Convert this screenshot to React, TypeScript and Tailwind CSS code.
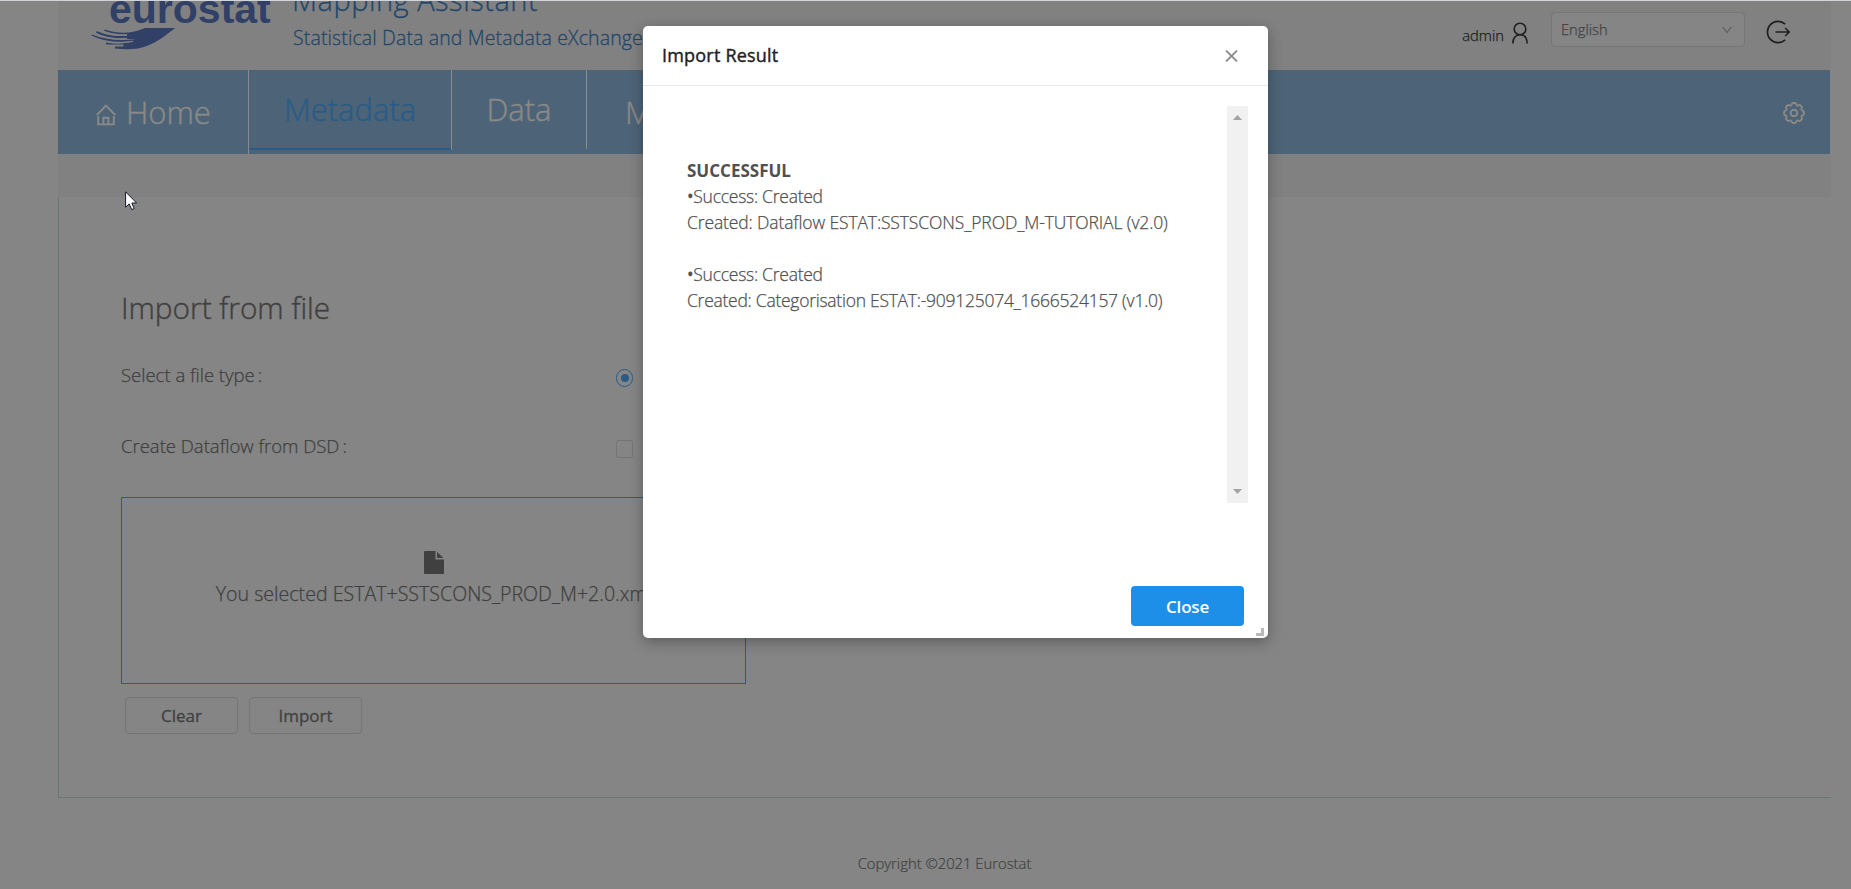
import type { ReactNode } from "react";

function HandLogo() {
  return (
    <svg width="84" height="22" viewBox="0 0 84 22" className="-mt-px block" fill="#304066">
      <path d="M54 0H84C74 8 66 14 57 17.500C47 21.500 37 22 24 20.500V18.500H32.500V16.500H15V14.600C27 16.400 36 15.500 44 12.500V11C33 11.500 15 10 5 4.500L6 3.200C16 8 26 9.500 36 8.700V7C28 6.500 20 5.500 13 2.800L14 1.500C30 7 42 5 54 0Z" />
      <path d="M.5 7.500C12 13.500 28 15 44 13V11.300C28 13 13 11.500 1 6.500Z" />
      <path d="M5 4.600C16 10 26 11 36 9.700V8C26 8.500 16 7.500 6 3.400Z" />
      <path
        d="M4 6.400C14 10.500 25 11.500 36 10.400M14 4.400C21 7 29 7.200 36 6.600M15 13.600C25 15.400 34 15 42 13.400"
        stroke="#818181"
        strokeWidth="1.300"
        fill="none"
      />
    </svg>
  );
}

function HomeIcon() {
  return (
    <svg width="20" height="22" viewBox="0 0 20 22" fill="none" stroke="#8b8987" strokeWidth="1.900">
      <path d="M.8 11L10 1.500L19.200 11" />
      <path d="M2.200 12V20.400H17.800V12" />
      <path d="M7.400 20V13.800H12.400V20" />
    </svg>
  );
}

function UserIcon() {
  return (
    <svg width="16" height="22" viewBox="0 0 16 22" fill="none" stroke="#1f1f1f" strokeWidth="1.600">
      <circle cx="8" cy="7" r="5.800" />
      <path d="M.9 21.500C.9 16 3.600 12.700 8 12.700S15.100 16 15.100 21.500" />
    </svg>
  );
}

function LogoutIcon() {
  return (
    <svg width="25" height="24" viewBox="0 0 25 24" fill="none" stroke="#1f1f1f" strokeWidth="1.600">
      <path d="M19.200 4.200A10.600 10.600 0 1 0 19.200 19.800" />
      <path d="M9.500 12H23M19.200 8L23.200 12L19.200 16" />
    </svg>
  );
}

function GearIcon() {
  const teeth = [0, 45, 90, 135, 180, 225, 270, 315];
  return (
    <svg width="22" height="22" viewBox="-11 -11 22 22" fill="none" stroke="#8b8987" strokeWidth="2">
      <circle r="3.300" />
      {teeth.map((a) => (
        <path
          key={a}
          transform={`rotate(${a})`}
          d="M-3.150 -7.600C-2.300 -7.800 -2.200 -9.900 -.900 -9.900H.900C2.200 -9.900 2.300 -7.800 3.150 -7.600"
        />
      ))}
    </svg>
  );
}

function FileIcon() {
  return (
    <svg width="20" height="23" viewBox="0 0 20 23" fill="#404040">
      <path d="M1 0H11.500V8.600H20V22Q20 23 19 23H1Q0 23 0 22V1Q0 0 1 0Z" />
      <path d="M13 .8L19.300 7.100H13Z" />
    </svg>
  );
}

function OutlineButton({ children }: { children: ReactNode }) {
  return (
    <button className="h-[37px] w-[113px] rounded-[4px] border border-[#757575] text-[17px] leading-none font-normal text-[#414141] [-webkit-text-stroke:0.3px]">
      {children}
    </button>
  );
}

function Header() {
  return (
    <header className="flex h-[69px] w-[1773px] justify-between overflow-hidden bg-[#818181]">
      <div className="flex">
        <div className="ml-[33px] w-[202px]">
          <div className="-mt-[12px] pl-[18px] font-['Liberation_Sans',sans-serif] text-[41px] leading-[40px] font-bold text-[#304066]">
            eurostat
          </div>
          <HandLogo />
        </div>
        <div className="font-light whitespace-nowrap text-[#21466a] [-webkit-text-stroke:0.3px]">
          <div className="-mt-[19px] -ml-px text-[29px] leading-[36px] tracking-[0.5px]">Mapping Assistant</div>
          <div className="mt-[6px] text-[19.5px] leading-[28px] tracking-[0.13px]">
            Statistical Data and Metadata eXchange
          </div>
        </div>
      </div>
      <div className="flex items-start pr-[40px] font-light [-webkit-text-stroke:0.25px]">
        <span className="mt-[24px] text-[14.8px] leading-[20px] text-[#1c1c1c]">admin</span>
        <span className="mt-[21px] ml-[8px]">
          <UserIcon />
        </span>
        <div className="mt-[11px] ml-[23px] flex h-[35px] w-[194px] items-center justify-between rounded-[4px] border border-[#767676] bg-[#858585] pr-[12px] pl-[9px] text-[14.7px] leading-none text-[#414141]">
          <span className="pb-px">English</span>
          <svg width="10" height="8" viewBox="0 0 10 8" fill="none" stroke="#5d5d5d" strokeWidth="1.200">
            <path d="M.8 1L5 6.500L9.200 1" />
          </svg>
        </div>
        <span className="mt-[19px] ml-[21px]">
          <LogoutIcon />
        </span>
      </div>
    </header>
  );
}

function Nav() {
  return (
    <nav className="flex h-[84px] w-[1772px] items-start bg-[#4d6478] text-[31px] leading-[40px] font-light text-[#8b8987] [-webkit-text-stroke:0.4px]">
      <div className="flex h-[84px] w-[191px] border-r border-[#8b8b8b] pl-[38px]">
        <span className="mt-[34px]">
          <HomeIcon />
        </span>
        <span className="mt-[22px] ml-[10px]">Home</span>
      </div>
      <div className="flex h-[80px] w-[203px] justify-center border-r border-[#8b8b8b]">
        <span className="h-[80px] w-full border-b-2 border-[#285c86] pt-[19px] text-center text-[#285c86]">
          Metadata
        </span>
      </div>
      <div className="h-[79px] w-[135px] border-r border-[#8b8b8b] pt-[19px] text-center">Data</div>
      <div className="w-[200px] pt-[22px] pl-[38px]">Mapping</div>
      <span className="mt-[32px] mr-[25px] ml-auto">
        <GearIcon />
      </span>
    </nav>
  );
}

function ImportForm() {
  return (
    <main className="h-[601px] w-[1773px] border-b border-l border-[#6b7776] pt-[91px] pl-[62px] font-light text-[#404040]">
      <h1 className="text-[29.8px] leading-[40px] [-webkit-text-stroke:0.4px]">Import from file</h1>
      <div className="mt-[33px] flex h-[28px] items-start text-[18.5px] leading-[28px] [-webkit-text-stroke:0.25px]">
        <span className="w-[495px]">
          Select a file type<span className="ml-[3px]">:</span>
        </span>
        <span className="mt-[8px] flex h-[18px] w-[17px] items-center justify-center rounded-full border-[1.500px] border-[#285c86]">
          <span className="size-[8px] rounded-full bg-[#285c86]" />
        </span>
      </div>
      <div className="mt-[43px] flex h-[28px] items-start text-[18.5px] leading-[28px] [-webkit-text-stroke:0.25px]">
        <span className="w-[495px]">
          Create Dataflow from DSD<span className="ml-[3px]">:</span>
        </span>
        <span className="mt-[8px] h-[18px] w-[17px] rounded-[2px] border border-[#757575]" />
      </div>
      <div className="mt-[37px] flex h-[187px] w-[625px] flex-col items-center border border-[#37587c] pt-[53px]">
        <FileIcon />
        <p className="mt-[6px] text-[19.6px] leading-[28px] [-webkit-text-stroke:0.25px]">
          You selected ESTAT+SSTSCONS_PROD_M+2.0.xml
        </p>
      </div>
      <div className="mt-[13px] ml-[4px] flex gap-[11px]">
        <OutlineButton>Clear</OutlineButton>
        <OutlineButton>Import</OutlineButton>
      </div>
    </main>
  );
}

function ImportResult() {
  return (
    <section
      role="dialog"
      className="absolute top-[25px] left-[643px] flex h-[612px] w-[625px] flex-col rounded-[5px] bg-white shadow-[0_4px_14px_rgba(0,0,0,0.3)]"
    >
      <div className="flex h-[60px] items-center justify-between border-b border-[#e8e8e8] pr-[30px] pl-[19px]">
        <h2 className="pb-px text-[18px] leading-none font-normal tracking-[0.2px] text-[#222] [-webkit-text-stroke:0.4px]">
          Import Result
        </h2>
        <svg width="13" height="12" viewBox="0 0 13 12" fill="none" stroke="#8c8c8c" strokeWidth="1.900">
          <path d="M1 .6L12 11.400M12 .6L1 11.400" />
        </svg>
      </div>
      <div className="mt-[20px] mr-[20px] ml-[44px] flex h-[397px] justify-between">
        <div className="pt-[51px] text-[17.5px] leading-[26px] font-light tracking-[-0.26px] whitespace-nowrap text-[#505050] [-webkit-text-stroke:0.25px]">
          <p className="-mb-[2px] text-[17px] leading-[28px] font-bold tracking-normal [-webkit-text-stroke:0]">
            SUCCESSFUL
          </p>
          <p>
            <span className="font-normal">•</span>Success: Created
          </p>
          <p className="tracking-[-0.12px]">Created: Dataflow ESTAT:SSTSCONS_PROD_M-TUTORIAL (v2.0)</p>
          <p className="mt-[26px]">
            <span className="font-normal">•</span>Success: Created
          </p>
          <p>Created: Categorisation ESTAT:-909125074_1666524157 (v1.0)</p>
        </div>
        <div className="flex w-[21px] flex-col items-center justify-between bg-[#f1f1f1] py-[9px]">
          <svg width="9" height="5" viewBox="0 0 9 5" fill="#a3a3a3">
            <path d="M0 5L4.500 0L9 5Z" />
          </svg>
          <svg width="9" height="5" viewBox="0 0 9 5" fill="#a3a3a3">
            <path d="M0 0L4.500 5L9 0Z" />
          </svg>
        </div>
      </div>
      <button className="mt-[83px] mr-[24px] h-[40px] w-[113px] self-end rounded-[4px] bg-[#1e8fe8] text-[17px] leading-none font-semibold tracking-[-0.2px] text-white">
        Close
      </button>
      <span className="absolute right-[4px] bottom-[2px] size-[8px] border-r-[3px] border-b-[3px] border-[#bababa]" />
    </section>
  );
}

export default function App() {
  return (
    <div className="relative h-[889px] w-[1851px] overflow-hidden border-t border-[#d0d4d8] bg-[#858585] pl-[58px] font-['Open_Sans',sans-serif]">
      <Header />
      <Nav />
      <div className="h-[43px] w-[1773px] bg-[#818181]" />
      <ImportForm />
      <footer className="mt-[55px] w-[1773px] text-center text-[14.8px] leading-[20px] font-light text-[#404040] [-webkit-text-stroke:0.2px]">
        Copyright ©2021 Eurostat
      </footer>
      <div className="absolute inset-0">
        <ImportResult />
        <svg className="absolute top-[190px] left-[125px]" width="13" height="20" viewBox="0 0 13 20">
          <path
            d="M.6 .8V16.200L4.200 12.900L6.700 18.600L9.200 17.500L6.800 12H11.600Z"
            fill="#fff"
            stroke="#16182c"
            strokeWidth="1"
          />
        </svg>
      </div>
    </div>
  );
}
